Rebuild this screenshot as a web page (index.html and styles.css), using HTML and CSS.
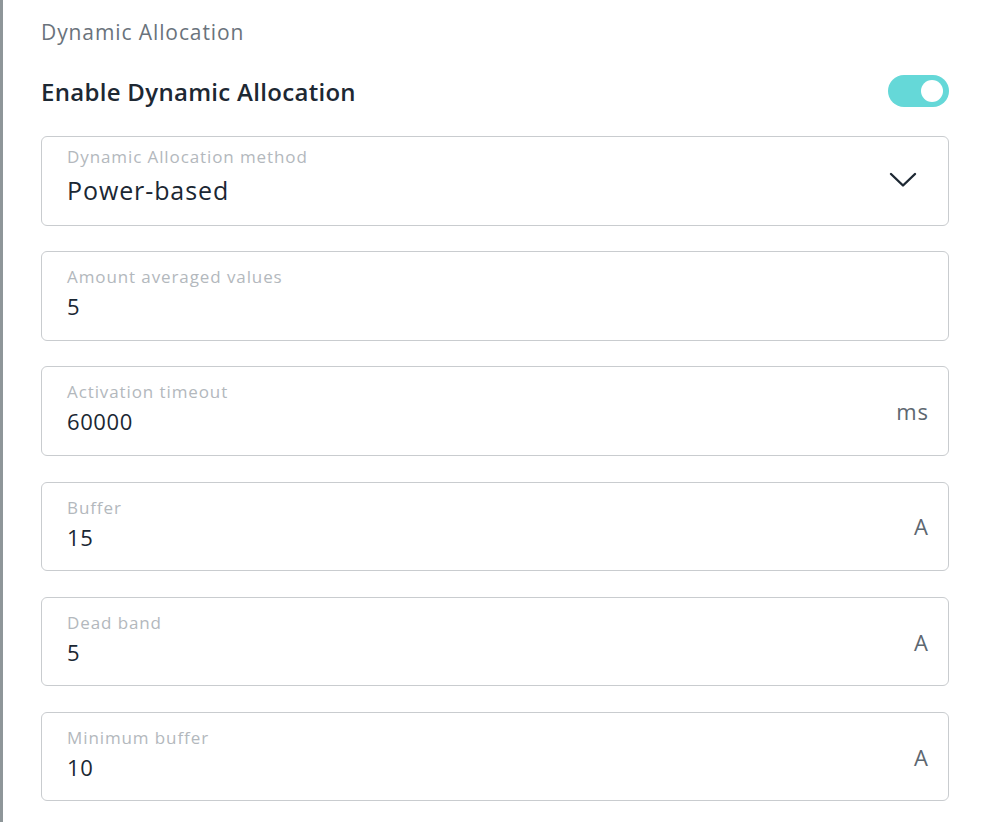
FILE: index.html
```html
<!DOCTYPE html>
<html lang="en">
<head>
    <meta charset="UTF-8">
    <meta name="viewport" content="width=device-width, initial-scale=1.0">
    <title>Dynamic Allocation</title>
    <link rel="stylesheet" href="styles.css">
</head>
<body>
    <div class="backdrop-edge"></div>
    <div class="panel">
        <div class="section-title">Dynamic Allocation</div>

        <div class="toggle-row">
            <span class="toggle-label">Enable Dynamic Allocation</span>
            <label class="switch">
                <input type="checkbox" checked>
                <span class="slider"></span>
            </label>
        </div>

        <!-- Method select -->
        <div class="field field-select">
            <div class="field-body">
                <div class="field-label">Dynamic Allocation method</div>
                <div class="field-value">Power-based</div>
            </div>
            <svg class="chevron" width="28" height="16" viewBox="0 0 28 16">
                <path d="M2 2 L14 13.5 L26 2" fill="none" stroke="#1d2833" stroke-width="2.4" stroke-linecap="round" stroke-linejoin="round"/>
            </svg>
        </div>

        <div class="field">
            <div class="field-body">
                <div class="field-label">Amount averaged values</div>
                <div class="field-value">5</div>
            </div>
        </div>

        <div class="field">
            <div class="field-body">
                <div class="field-label">Activation timeout</div>
                <div class="field-value">60000</div>
            </div>
            <span class="unit">ms</span>
        </div>

        <div class="field">
            <div class="field-body">
                <div class="field-label">Buffer</div>
                <div class="field-value">15</div>
            </div>
            <span class="unit">A</span>
        </div>

        <div class="field">
            <div class="field-body">
                <div class="field-label">Dead band</div>
                <div class="field-value">5</div>
            </div>
            <span class="unit">A</span>
        </div>

        <div class="field">
            <div class="field-body">
                <div class="field-label">Minimum buffer</div>
                <div class="field-value">10</div>
            </div>
            <span class="unit">A</span>
        </div>
    </div>
</body>
</html>
```

FILE: styles.css
```css
body {
    font-family: "Open Sans", Lato, sans-serif;
    background-color: #fff;
    margin: 0;
    display: flex;
    height: 822px;
    overflow: hidden;
}
.backdrop-edge {
    width: 3px;
    flex-shrink: 0;
    background-color: #8e9699;
}
.panel {
    flex: 1;
    padding: 20px 39px 0 38px;
}
.section-title {
    font-size: 21px;
    line-height: 24px;
    letter-spacing: 0.9px;
    color: #6a737c;
}
.toggle-row {
    display: flex;
    justify-content: space-between;
    align-items: center;
    height: 32px;
    margin-top: 31px;
    margin-bottom: 29px;
}
.toggle-label {
    font-size: 24px;
    font-weight: 600;
    letter-spacing: 0.3px;
    color: #1d2833;
}
.switch {
    position: relative;
    width: 61px;
    height: 32px;
}
.switch input {
    display: none;
}
.slider {
    position: absolute;
    inset: 0;
    background-color: #65d8d8;
    border-radius: 16px;
}
.slider::after {
    content: "";
    position: absolute;
    top: 5px;
    right: 6px;
    width: 22px;
    height: 22px;
    border-radius: 50%;
    background-color: #fff;
}
.field {
    box-sizing: border-box;
    height: 89.5px;
    border: 1px solid #c9cccf;
    border-radius: 6px;
    display: flex;
    align-items: center;
    padding: 0 19px 0 25px;
    margin-bottom: 25.7px;
}
.field-body {
    flex: 1;
    align-self: flex-start;
    padding-top: 15px;
}
.field-label {
    font-size: 17px;
    line-height: 20px;
    letter-spacing: 0.9px;
    color: #b3b8bd;
}
.field-value {
    font-size: 22px;
    line-height: 24px;
    margin-top: 7px;
    letter-spacing: 0.6px;
    color: #1b2733;
}
.field-select {
    padding-right: 31px;
}
.field-select .field-body {
    padding-top: 10px;
}
.field-select .field-value {
    font-size: 25px;
    line-height: 30px;
    margin-top: 8px;
    letter-spacing: 0.9px;
}
.chevron {
    margin-top: -2px;
}
.unit {
    font-size: 22px;
    letter-spacing: 1px;
    color: #5d6770;
}
```
